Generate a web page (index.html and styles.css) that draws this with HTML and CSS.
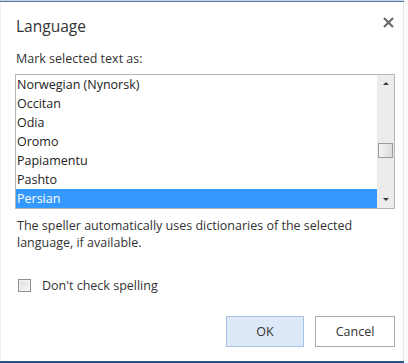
FILE: index.html
```html
<!DOCTYPE html>
<html lang="en">

<head>
    <meta charset="UTF-8">
    <meta name="viewport" content="width=device-width, initial-scale=1.0">
    <title>Language</title>
    <link rel="stylesheet" href="styles.css">
</head>

<body>
    <div class="top-strip"></div>
    <div class="dialog">
        <div class="dialog-header">
            <span class="dialog-title">Language</span>
            <span class="close-btn" title="Close">
                <svg width="11" height="11" viewBox="0 0 11 11">
                    <path d="M1 1 L10 10 M10 1 L1 10" stroke="#6b6b6b" stroke-width="2.2" fill="none" />
                </svg>
            </span>
        </div>
        <div class="field-label">Mark selected text as:</div>
        <div class="listbox">
            <div class="listbox-items">
                <div class="listbox-item">Norwegian (Nynorsk)</div>
                <div class="listbox-item">Occitan</div>
                <div class="listbox-item">Odia</div>
                <div class="listbox-item">Oromo</div>
                <div class="listbox-item">Papiamentu</div>
                <div class="listbox-item">Pashto</div>
                <div class="listbox-item selected">Persian</div>
            </div>
            <div class="scrollbar">
                <div class="scroll-arrow up"></div>
                <div class="scroll-track">
                    <div class="scroll-thumb"></div>
                </div>
                <div class="scroll-arrow down"></div>
            </div>
        </div>
        <p class="help-text">The speller automatically uses dictionaries of the selected language, if available.</p>
        <label class="check-row">
            <span class="checkbox"></span>
            <span>Don't check spelling</span>
        </label>
        <div class="dialog-buttons">
            <button class="btn primary">OK</button>
            <button class="btn">Cancel</button>
        </div>
    </div>
    <div class="bottom-strip"></div>
</body>

</html>
```

FILE: styles.css
```css
body {
    margin: 0;
    width: 408px;
    height: 363px;
    overflow: hidden;
    background-color: #fafafa;
    font-family: "Open Sans", "Noto Sans", sans-serif;
    color: #333;
}

.top-strip {
    height: 2px;
    width: 404px;
    background-color: #c9d3e2;
    border-bottom: 1px solid #5877a8;
    box-sizing: border-box;
}

.bottom-strip {
    height: 2px;
    width: 404px;
    background-color: #2b4f86;
}

.dialog {
    width: 404px;
    height: 359px;
    box-sizing: border-box;
    padding: 0 8px 0 14px;
    background-color: #fff;
    border-left: 1px solid #eef1f4;
    border-right: 1px solid #e3e6ea;
}

.dialog-header {
    display: flex;
    justify-content: space-between;
    align-items: flex-start;
    height: 45px;
    box-sizing: border-box;
    padding-top: 14px;
}

.dialog-title {
    font-size: 15.5px;
    line-height: 20px;
    color: #333;
    padding-left: 1px;
}

.close-btn {
    display: flex;
    margin-right: 1px;
    margin-top: 1px;
}

.field-label {
    font-size: 12.5px;
    padding-left: 1px;
    height: 27px;
    line-height: 24px;
}

.listbox {
    display: flex;
    width: 380px;
    height: 135px;
    box-sizing: border-box;
    border: 1px solid #b5b5b5;
}

.listbox-items {
    flex: 1;
}

.listbox-item {
    height: 19px;
    line-height: 19px;
    font-size: 12.5px;
    padding-left: 1px;
    color: #222;
}

.listbox-item.selected {
    background-color: #3399ff;
    color: #fff;
}

.scrollbar {
    width: 17px;
    display: flex;
    flex-direction: column;
    background-color: #ececec;
}

.scroll-arrow {
    height: 17px;
    display: flex;
    align-items: center;
    justify-content: center;
}

.scroll-arrow::after {
    content: "";
    width: 0;
    height: 0;
    border-left: 3px solid transparent;
    border-right: 3px solid transparent;
}

.scroll-arrow.up::after {
    border-bottom: 3px solid #3a3a3a;
}

.scroll-arrow.down::after {
    border-top: 3px solid #3a3a3a;
}

.scroll-track {
    flex: 1;
}

.scroll-thumb {
    margin: 51px 1px 0 1px;
    height: 15px;
    box-sizing: border-box;
    border: 1px solid #9a9a9a;
    background: linear-gradient(to right, #f4f4f4, #dcdcdc);
}

.help-text {
    margin: 8px 0 0 2px;
    font-size: 12.5px;
    line-height: 17px;
    width: 370px;
}

.check-row {
    display: flex;
    align-items: center;
    gap: 11px;
    margin-top: 26px;
    padding-left: 3px;
    font-size: 12.5px;
}

.checkbox {
    width: 13px;
    height: 13px;
    box-sizing: border-box;
    border: 1px solid #8f8f8f;
    background: linear-gradient(135deg, #dedede, #f6f6f6);
    box-shadow: inset 0 0 0 1px #f2f2f2;
}

.dialog-buttons {
    display: flex;
    justify-content: flex-end;
    gap: 11px;
    margin-top: 22px;
}

.btn {
    width: 78px;
    height: 31px;
    font-family: inherit;
    font-size: 12.5px;
    color: #333;
    background-color: #fff;
    border: 1px solid #ababab;
    margin: 0;
}

.btn.primary {
    background-color: #dde8f8;
    border-color: #a5c1e6;
}

.btn + .btn {
    width: 80px;
}
```
